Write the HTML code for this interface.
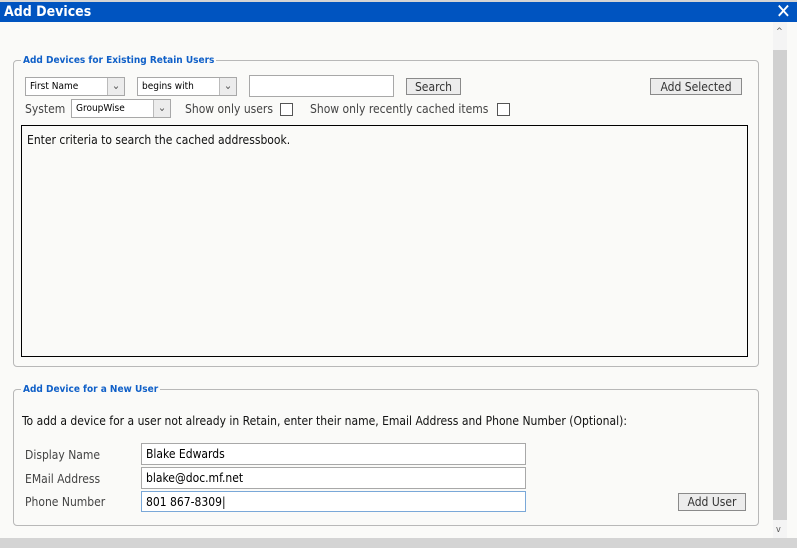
<!DOCTYPE html>
<html><head><style>
*{box-sizing:border-box;margin:0;padding:0}
body{width:797px;height:548px;background:#fafaf8;font-family:"DejaVu Sans Condensed","Liberation Sans",sans-serif;font-size:12px;color:#222;position:relative;overflow:hidden}
.a{position:absolute}
.title{left:0;top:2px;width:797px;height:20px;background:#0054c0;color:#fff;font-weight:bold;font-size:14px;line-height:21px;padding-left:4px}
.fs{border:1px solid #b8b8b8;border-radius:4px}
.lg{background:#fafaf8;color:#1060c8;font-weight:bold;font-size:10px;padding:0 2px}
.sel{border:1px solid #a8a8a8;background:#fff;font-size:10px;line-height:17px;padding-left:4px;color:#000}
.sel i{position:absolute;right:0;top:0;width:17px;height:17px;border-left:1px solid #bbb;background:#ececec;font-style:normal;text-align:center;font-size:11px;line-height:15px;color:#555}
.inp{border:1px solid #a8a8a8;background:#fff;padding-left:4px;color:#000;line-height:21px}
.btn{border:1px solid #8a8a8a;background:#ececec;text-align:center;line-height:16px;color:#333}
.cb{width:13px;height:13px;border:1px solid #555;background:#fff}
.t{color:#444}
</style></head><body>
<div class="a" style="left:0;top:0;width:797px;height:2px;background:#d4d4d4"></div>
<div class="a title">Add Devices<span style="position:absolute;right:6px;top:-1px;font-size:20px">✕</span></div>
<div class="a" style="left:773px;top:22px;width:14px;height:516px;background:#f4f4f4"></div>
<div class="a" style="left:773px;top:50px;width:14px;height:470px;background:#d0d0d0"></div>
<div class="a" style="left:776px;top:27px;font-size:9px;color:#555">^</div>
<div class="a" style="left:776px;top:525px;font-size:9px;color:#555">v</div>
<div class="a" style="left:0;top:538px;width:797px;height:10px;background:#d4d4d4"></div>

<div class="a fs" style="left:13px;top:60px;width:746px;height:307px"></div>
<div class="a lg" style="left:21px;top:55px">Add Devices for Existing Retain Users</div>
<div class="a sel" style="left:25px;top:77px;width:100px;height:19px">First Name<i>⌄</i></div>
<div class="a sel" style="left:137px;top:77px;width:100px;height:19px">begins with<i>⌄</i></div>
<div class="a inp" style="left:249px;top:75px;width:145px;height:22px"></div>
<div class="a btn" style="left:406px;top:78px;width:55px;height:17px">Search</div>
<div class="a btn" style="left:650px;top:78px;width:92px;height:17px">Add Selected</div>
<div class="a t" style="left:25px;top:102px">System</div>
<div class="a sel" style="left:71px;top:99px;width:100px;height:19px">GroupWise<i>⌄</i></div>
<div class="a t" style="left:185px;top:102px">Show only users</div>
<div class="a cb" style="left:280px;top:103px"></div>
<div class="a t" style="left:310px;top:102px">Show only recently cached items</div>
<div class="a cb" style="left:497px;top:103px"></div>
<div class="a" style="left:21px;top:125px;width:727px;height:232px;border:1px solid #000;background:#fafaf8;padding:7px 0 0 5px;color:#111">Enter criteria to search the cached addressbook.</div>

<div class="a fs" style="left:13px;top:389px;width:746px;height:137px"></div>
<div class="a lg" style="left:21px;top:384px">Add Device for a New User</div>
<div class="a" style="left:22px;top:414px;color:#111">To add a device for a user not already in Retain, enter their name, Email Address and Phone Number (Optional):</div>
<div class="a t" style="left:25px;top:448px">Display Name</div>
<div class="a t" style="left:25px;top:472px">EMail Address</div>
<div class="a t" style="left:25px;top:495px">Phone Number</div>
<div class="a inp" style="left:141px;top:443px;width:385px;height:22px">Blake Edwards</div>
<div class="a inp" style="left:141px;top:467px;width:385px;height:22px">blake@doc.mf.net</div>
<div class="a inp" style="left:141px;top:491px;width:385px;height:21px;border-color:#7aa8d8;line-height:20px">801 867-8309|</div>
<div class="a btn" style="left:678px;top:493px;width:68px;height:18px">Add User</div>
</body></html>
